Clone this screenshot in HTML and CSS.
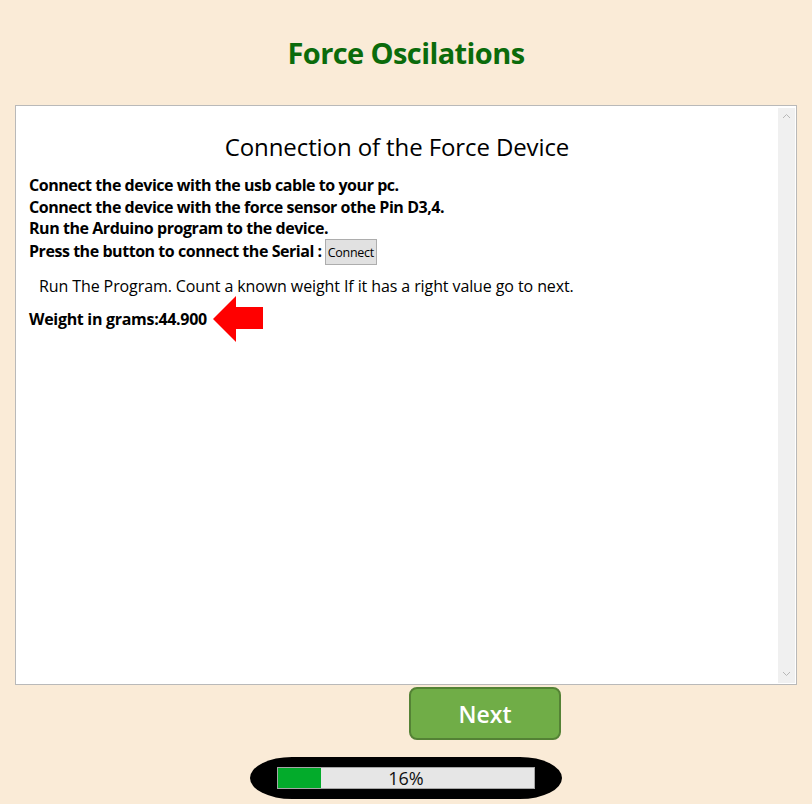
FILE: index.html
```html
<!DOCTYPE html>
<html>
<head>
<meta charset="utf-8">
<link rel="stylesheet" href="styles.css">
</head>
<body>
<h1 class="title">Force Oscilations</h1>
<div class="panel">
  <div class="content">
    <h2 class="heading">Connection of the Force Device</h2>
    <div class="steps">
      <div>Connect the device with the usb cable to your pc.</div>
      <div>Connect the device with the force sensor othe Pin D3,4.</div>
      <div>Run the Arduino program to the device.</div>
      <div class="serial">Press the button to connect the Serial : <button class="connect">Connect</button></div>
    </div>
    <p class="run">Run The Program. Count a known weight If it has a right value go to next.</p>
    <div class="weight-row">
      <span class="weight">Weight in grams:44.900</span>
      <svg class="arrow" width="56" height="48" viewBox="0 0 56 48"><polygon points="0,23 23,0 23,11 50,11 50,33 23,33 23,46" fill="#ff0000"/></svg>
    </div>
  </div>
  <div class="scrollbar">
    <svg width="9" height="6" viewBox="0 0 9 6"><polyline points="1,5 4.5,1.5 8,5" fill="none" stroke="#b8b8b8" stroke-width="1"/></svg>
    <svg width="9" height="6" viewBox="0 0 9 6"><polyline points="1,1 4.5,4.5 8,1" fill="none" stroke="#b8b8b8" stroke-width="1"/></svg>
  </div>
</div>
<div class="actions">
  <button class="next">Next</button>
</div>
<div class="progress-row">
  <div class="pill">
    <div class="bar">
      <div class="fill" style="width:16.7%"></div>
      <span class="pct">16%</span>
    </div>
  </div>
</div>
</body>
</html>
```
FILE: styles.css
```css
html, body {
  margin: 0;
  padding: 0;
}
body {
  background: #faebd7;
  font-family: "Open Sans", "Noto Sans", sans-serif;
  color: #000;
  width: 812px;
  height: 804px;
  overflow: hidden;
}
.title {
  margin: 0;
  padding-top: 33px;
  height: 105px;
  box-sizing: border-box;
  text-align: center;
  color: #0b6b0b;
  font-size: 29px;
  font-weight: 700;
  line-height: 40px;
  letter-spacing: -0.6px;
}
.panel {
  margin: 0 15px;
  height: 580px;
  box-sizing: border-box;
  border: 1px solid #b9b9b9;
  background: #fff;
  display: flex;
}
.content {
  flex: 1;
  padding: 0 0 0 13px;
}
.heading {
  margin: 24px 0 11px -13px;
  text-align: center;
  font-weight: 400;
  font-size: 24px;
  line-height: 34px;
  letter-spacing: -0.1px;
}
.steps {
  font-weight: 700;
  font-size: 16px;
  line-height: 21.5px;
  letter-spacing: -0.45px;
}
.serial {
  display: flex;
  align-items: center;
  gap: 3px;
  height: 25px;
}
.connect {
  font-family: inherit;
  font-size: 12.5px;
  letter-spacing: -0.3px;
  padding: 0 2px;
  height: 26px;
  background: #e1e1e1;
  border: 1px solid #adadad;
  border-radius: 0;
  color: #000;
}
.run {
  margin: 10px 0 0 10px;
  font-size: 16px;
  line-height: 22px;
  letter-spacing: -0.1px;
}
.weight-row {
  display: flex;
  align-items: center;
  margin-top: -1px;
  gap: 6px;
  height: 46px;
}
.weight {
  font-weight: 700;
  font-size: 16px;
  letter-spacing: -0.3px;
}
.arrow {
  margin-top: 2px;
}
.scrollbar {
  width: 17px;
  margin: 2px 1px 1px 0;
  background: #f0f0f0;
  display: flex;
  flex-direction: column;
  justify-content: space-between;
  align-items: center;
  padding: 5px 0 6px;
  box-sizing: border-box;
}
.actions {
  display: flex;
  padding-left: 409px;
  margin-top: 2px;
}
.next {
  width: 152px;
  height: 53px;
  background: #70ad47;
  border: 2px solid #548235;
  border-radius: 8px;
  color: #fff;
  font-family: "Open Sans", sans-serif;
  font-size: 23px;
  font-weight: 600;
  padding: 0;
}
.progress-row {
  display: flex;
  padding-left: 250px;
  margin-top: 17px;
}
.pill {
  width: 312px;
  height: 42px;
  border-radius: 42px / 21px;
  background: #000;
  display: flex;
  align-items: center;
  padding-left: 27px;
  box-sizing: border-box;
}
.bar {
  position: relative;
  width: 258px;
  height: 22px;
  box-sizing: border-box;
  border: 1px solid #a6a6a6;
  background: #e6e6e6;
  display: flex;
  align-items: center;
  justify-content: center;
}
.fill {
  position: absolute;
  left: 0;
  top: 0;
  bottom: 0;
  background: #03ab2b;
}
.pct {
  position: relative;
  font-size: 18px;
  line-height: 20px;
  color: #111;
}
```
